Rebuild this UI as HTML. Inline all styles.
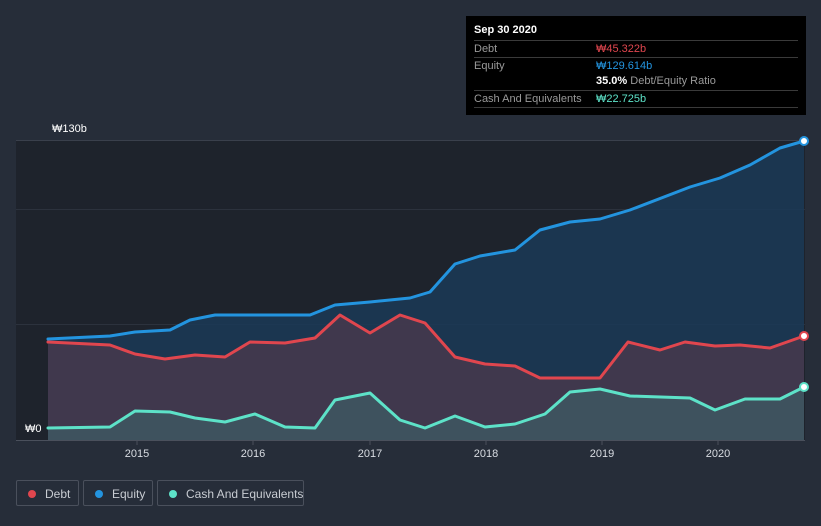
<!DOCTYPE html>
<html><head><style>
html,body{margin:0;width:821px;height:526px;overflow:hidden}
body{background:#262d39;font-family:"Liberation Sans",sans-serif;position:relative}
.tt{position:absolute;left:466px;top:16px;width:340px;height:99px;background:#000;color:#fff;font-size:11px}
.tt .h{position:absolute;left:8px;top:8px;font-weight:bold}
.row{position:absolute;left:8px;width:324px;border-top:1px solid #3a3a3a;height:16px;line-height:16px;color:#9a9a9a}
.row span{position:absolute;left:122px;white-space:nowrap}
.leg{position:absolute;top:480px;height:26px;border:1px solid #4a505c;border-radius:2px;color:#c8ccd2;font-size:12px;line-height:26px;box-sizing:border-box;white-space:nowrap}
.leg i{position:absolute;left:11px;top:9px;width:8px;height:8px;border-radius:50%}
</style></head><body>
<svg width="821" height="526" style="position:absolute;left:0;top:0">
<rect x="16" y="140" width="789" height="300" fill="#1e232c"/>
<line x1="16" y1="140.5" x2="805" y2="140.5" stroke="#3a404c"/>
<line x1="16" y1="209.5" x2="805" y2="209.5" stroke="#2c323d"/>
<line x1="16" y1="324.5" x2="805" y2="324.5" stroke="#2c323d"/>
<line x1="16" y1="440.5" x2="805" y2="440.5" stroke="#4a505c"/>
<g stroke="#4a505c"><line x1="137" y1="440" x2="137" y2="445"/><line x1="253" y1="440" x2="253" y2="445"/><line x1="370" y1="440" x2="370" y2="445"/><line x1="486" y1="440" x2="486" y2="445"/><line x1="602" y1="440" x2="602" y2="445"/><line x1="718" y1="440" x2="718" y2="445"/></g>
<polygon fill="#1b3a57" opacity="0.85" points="48,339 110,336 135,332 170,330 190,320 215,315 310,315 335,305 370,302 410,298 430,292 455,264 480,256 515,250 540,230 570,222 600,219 630,210 690,187 720,178 750,165 780,148 804,141 804,440 48,440"/>
<polygon fill="#4a3a4c" opacity="0.8" points="48,342 110,345 135,354 165,359 195,355 225,357 250,342 285,343 315,338 340,315 370,333 400,315 425,323 455,357 485,364 515,366 540,378 600,378 628,342 660,350 685,342 715,346 740,345 770,348 804,336 804,440 48,440"/>
<polygon fill="#3e5560" opacity="0.9" points="48,428 110,427 135,411 170,412 195,418 225,422 255,414 285,427 315,428 335,400 370,393 400,420 425,428 455,416 485,427 515,424 545,414 570,392 600,389 630,396 690,398 715,410 745,399 780,399 804,387 804,440 48,440"/>
<g fill="none" stroke-width="3" stroke-linejoin="round" stroke-linecap="round">
<polyline stroke="#2394df" points="48,339 110,336 135,332 170,330 190,320 215,315 310,315 335,305 370,302 410,298 430,292 455,264 480,256 515,250 540,230 570,222 600,219 630,210 690,187 720,178 750,165 780,148 804,141"/>
<polyline stroke="#e0464e" points="48,342 110,345 135,354 165,359 195,355 225,357 250,342 285,343 315,338 340,315 370,333 400,315 425,323 455,357 485,364 515,366 540,378 600,378 628,342 660,350 685,342 715,346 740,345 770,348 804,336"/>
<polyline stroke="#5de2c8" points="48,428 110,427 135,411 170,412 195,418 225,422 255,414 285,427 315,428 335,400 370,393 400,420 425,428 455,416 485,427 515,424 545,414 570,392 600,389 630,396 690,398 715,410 745,399 780,399 804,387"/>
</g>
<circle cx="804" cy="141" r="4" fill="#fff" stroke="#2394df" stroke-width="2"/>
<circle cx="804" cy="336" r="4" fill="#fff" stroke="#e0464e" stroke-width="2"/>
<circle cx="804" cy="387" r="4" fill="#fff" stroke="#5de2c8" stroke-width="2"/>
<g fill="#fff" font-size="11" font-family="Liberation Sans,sans-serif">
<text x="52" y="132">₩130b</text><text x="25" y="432">₩0</text>
<g fill="#d8dce2" text-anchor="middle"><text x="137" y="457">2015</text><text x="253" y="457">2016</text><text x="370" y="457">2017</text><text x="486" y="457">2018</text><text x="602" y="457">2019</text><text x="718" y="457">2020</text></g>
</g>
</svg>
<div class="tt"><div class="h">Sep 30 2020</div>
<div class="row" style="top:24px">Debt<span style="color:#e0464e">₩45.322b</span></div>
<div class="row" style="top:41px">Equity<span style="color:#2394df">₩129.614b</span></div>
<div class="row" style="top:57px;border-top:none"><span><b style="color:#fff">35.0%</b> Debt/Equity Ratio</span></div>
<div class="row" style="top:74px;border-bottom:1px solid #3a3a3a">Cash And Equivalents<span style="color:#5de2c8">₩22.725b</span></div>
</div>
<div class="leg" style="left:16px;width:63px"><i style="background:#e0464e"></i><span style="position:absolute;left:28px">Debt</span></div>
<div class="leg" style="left:83px;width:70px"><i style="background:#2394df"></i><span style="position:absolute;left:28px">Equity</span></div>
<div class="leg" style="left:157px;width:147px"><i style="background:#5de2c8"></i><span style="position:absolute;left:28px">Cash And Equivalents</span></div>
</body></html>
